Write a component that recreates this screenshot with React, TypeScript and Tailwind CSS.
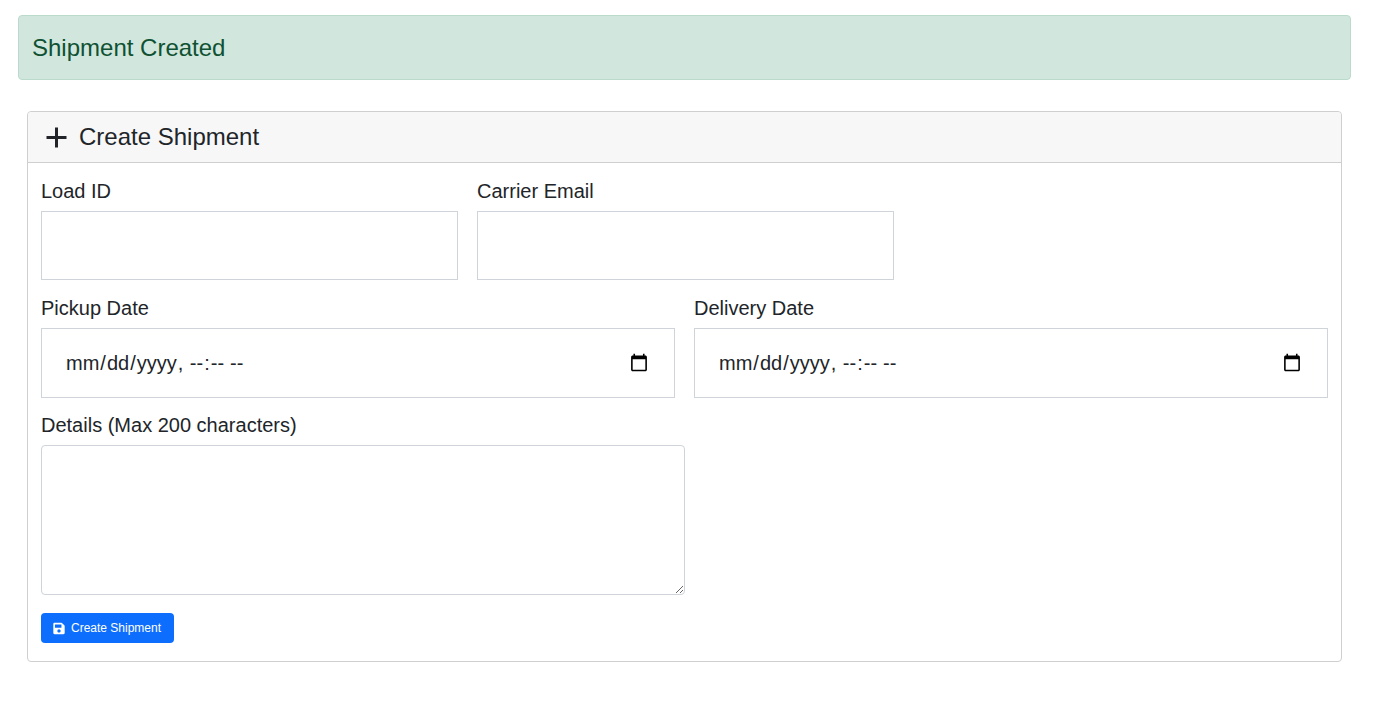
import React from "react";
import { FaSave } from "react-icons/fa";

const labelCls = "block text-[20px] leading-[24px] mb-[8px]";
const inputCls = "block w-full bg-white border border-[#ced4da] outline-none text-[20px] text-[#212529]";

export default function App() {
  return (
    <div className="min-h-[703px] bg-white text-[#212529] font-['Liberation_Sans',Arial,sans-serif]">
      <div className="pt-[15px] pl-[18px] pr-[22px]">
        <div className="h-[65px] flex items-center px-[13px] bg-[#d1e7dd] border border-[#badbcc] rounded-[4px] text-[#0f5132] text-[24px]">
          Shipment Created
        </div>
      </div>
      <div className="mt-[31px] ml-[27px] mr-[31px] h-[551px] border border-[#cfcfcf] rounded-[4px] flex flex-col">
        <div className="h-[51px] shrink-0 flex items-center gap-[11px] pl-[17px] bg-[#f7f7f7] border-b border-[#cfcfcf] rounded-t-[4px] text-[24px]">
          <svg width="23" height="23" viewBox="0 0 23 23" stroke="#212529" strokeWidth="3" fill="none">
            <path d="M11.5 1.5v20M1.5 11.5h20" />
          </svg>
          <span>Create Shipment</span>
        </div>
        <form className="pl-[13px] pr-[13px] pt-[16px] flex flex-col">
          <div className="flex gap-[19px]">
            <div className="w-[417px]">
              <label className={labelCls}>Load ID</label>
              <input type="text" className={inputCls + " h-[69px] px-[13px]"} />
            </div>
            <div className="w-[417px]">
              <label className={labelCls}>Carrier Email</label>
              <input type="email" className={inputCls + " h-[69px] px-[13px]"} />
            </div>
          </div>
          <div className="flex gap-[19px] mt-[16px]">
            <div className="w-[634px]">
              <label className={labelCls}>Pickup Date</label>
              <input type="datetime-local" className={inputCls + " h-[70px] px-[23px]"} />
            </div>
            <div className="w-[634px]">
              <label className={labelCls}>Delivery Date</label>
              <input type="datetime-local" className={inputCls + " h-[70px] px-[23px]"} />
            </div>
          </div>
          <div className="mt-[15px] w-[644px]">
            <label className={labelCls}>Details (Max 200 characters)</label>
            <textarea className={inputCls + " h-[150px] rounded-[4px] p-[13px] resize-y"} />
          </div>
          <div className="mt-[18px]">
            <button type="button" className="h-[30px] w-[133px] flex items-center gap-[6px] pl-[12px] bg-[#0d6efd] text-white text-[12px] rounded-[4px]">
              <FaSave className="w-[12px] h-[13px]" />
              <span>Create Shipment</span>
            </button>
          </div>
        </form>
      </div>
    </div>
  );
}
